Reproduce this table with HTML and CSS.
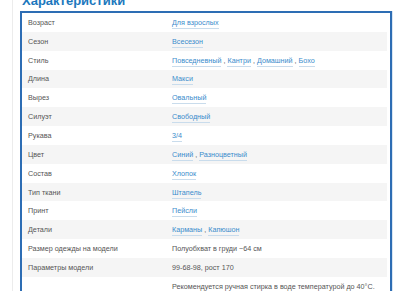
FILE: index.html
```html
<!DOCTYPE html>
<html lang="ru">
<head>
<meta charset="utf-8">
<link rel="stylesheet" href="styles.css">
</head>
<body>
<div class="page">
  <h2 class="title">Характеристики</h2>
  <div class="box">
    <div class="row"><div class="label">Возраст</div><div class="value"><a class="lnk">Для взрослых</a></div></div>
    <div class="row"><div class="label">Сезон</div><div class="value"><a class="lnk">Всесезон</a></div></div>
    <div class="row"><div class="label">Стиль</div><div class="value"><a class="lnk">Повседневный</a> , <a class="lnk">Кантри</a> , <a class="lnk">Домашний</a> , <a class="lnk">Бохо</a></div></div>
    <div class="row"><div class="label">Длина</div><div class="value"><a class="lnk">Макси</a></div></div>
    <div class="row"><div class="label">Вырез</div><div class="value"><a class="lnk">Овальный</a></div></div>
    <div class="row"><div class="label">Силуэт</div><div class="value"><a class="lnk">Свободный</a></div></div>
    <div class="row"><div class="label">Рукава</div><div class="value"><a class="lnk">3/4</a></div></div>
    <div class="row"><div class="label">Цвет</div><div class="value"><a class="lnk">Синий</a> , <a class="lnk">Разноцветный</a></div></div>
    <div class="row"><div class="label">Состав</div><div class="value"><a class="lnk">Хлопок</a></div></div>
    <div class="row"><div class="label">Тип ткани</div><div class="value"><a class="lnk">Штапель</a></div></div>
    <div class="row"><div class="label">Принт</div><div class="value"><a class="lnk">Пейсли</a></div></div>
    <div class="row"><div class="label">Детали</div><div class="value"><a class="lnk">Карманы</a> , <a class="lnk">Капюшон</a></div></div>
    <div class="row"><div class="label">Размер одежды на модели</div><div class="value">Полуобхват в груди ~64 см</div></div>
    <div class="row"><div class="label">Параметры модели</div><div class="value">99-68-98, рост 170</div></div>
    <div class="row"><div class="label"></div><div class="value">Рекомендуется ручная стирка в воде температурой до 40°С.</div></div>
  </div>
</div>
</body>
</html>
```

FILE: styles.css
```css
html, body {
  margin: 0;
  padding: 0;
  background: #fff;
  overflow: hidden;
}
body {
  font-family: "Liberation Sans", Arial, sans-serif;
}
.page {
  margin-left: 12px;
  border-left: 1px solid #ececec;
  padding-left: 7px;
  width: 372px;
}
.title {
  margin: -6px 0 4px 2px;
  font-size: 13px;
  line-height: 13px;
  font-weight: bold;
  color: #1c78bd;
}
.box {
  border: 2px solid #2d6db4;
  padding-right: 3px;
  box-shadow: 1px 0 0 #d9e6f2;
}
.row {
  display: flex;
  align-items: center;
  height: 18.85px;
  font-size: 7.2px;
  color: #555;
  white-space: nowrap;
}
.row:nth-child(even) {
  background: #f5f5f5;
}
.label {
  width: 144px;
  padding-left: 6px;
  flex: none;
}
.value {
  flex: 1;
  color: #555;
}
.lnk {
  color: #3a8ccc;
  text-decoration: none;
  border-bottom: 1px solid #c9dcec;
  padding-bottom: 1px;
}
```
